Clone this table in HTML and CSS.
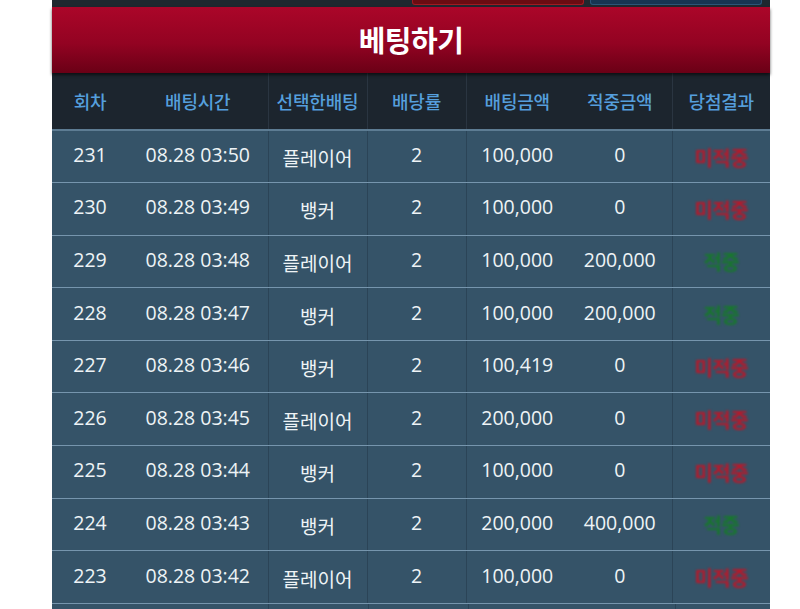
FILE: index.html
```html
<!DOCTYPE html>
<html lang="ko">
<head>
<meta charset="utf-8">
<link rel="stylesheet" href="styles.css">
</head>
<body>
<div class="panel">
  <div class="topbar">
    <div class="tabs">
      <span class="tab tab-red"></span>
      <span class="tab tab-blue"></span>
    </div>
  </div>
  <div class="title">베팅하기</div>
  <table class="bets">
    <colgroup>
      <col class="c1"><col class="c2"><col class="c3"><col class="c4"><col class="c5"><col class="c6"><col class="c7">
    </colgroup>
    <thead>
      <tr>
        <th>회차</th><th>배팅시간</th><th class="bl">선택한배팅</th><th class="bl">배당률</th><th class="bl">배팅금액</th><th>적중금액</th><th class="bl">당첨결과</th>
      </tr>
    </thead>
    <tbody>
      <tr><td>231</td><td>08.28 03:50</td><td class="bl kr">플레이어</td><td class="bl">2</td><td class="bl">100,000</td><td>0</td><td class="bl res"><span class="lose">미적중</span></td></tr>
      <tr><td>230</td><td>08.28 03:49</td><td class="bl kr">뱅커</td><td class="bl">2</td><td class="bl">100,000</td><td>0</td><td class="bl res"><span class="lose">미적중</span></td></tr>
      <tr><td>229</td><td>08.28 03:48</td><td class="bl kr">플레이어</td><td class="bl">2</td><td class="bl">100,000</td><td>200,000</td><td class="bl res"><span class="win">적중</span></td></tr>
      <tr><td>228</td><td>08.28 03:47</td><td class="bl kr">뱅커</td><td class="bl">2</td><td class="bl">100,000</td><td>200,000</td><td class="bl res"><span class="win">적중</span></td></tr>
      <tr><td>227</td><td>08.28 03:46</td><td class="bl kr">뱅커</td><td class="bl">2</td><td class="bl">100,419</td><td>0</td><td class="bl res"><span class="lose">미적중</span></td></tr>
      <tr><td>226</td><td>08.28 03:45</td><td class="bl kr">플레이어</td><td class="bl">2</td><td class="bl">200,000</td><td>0</td><td class="bl res"><span class="lose">미적중</span></td></tr>
      <tr><td>225</td><td>08.28 03:44</td><td class="bl kr">뱅커</td><td class="bl">2</td><td class="bl">100,000</td><td>0</td><td class="bl res"><span class="lose">미적중</span></td></tr>
      <tr><td>224</td><td>08.28 03:43</td><td class="bl kr">뱅커</td><td class="bl">2</td><td class="bl">200,000</td><td>400,000</td><td class="bl res"><span class="win">적중</span></td></tr>
      <tr><td>223</td><td>08.28 03:42</td><td class="bl kr">플레이어</td><td class="bl">2</td><td class="bl">100,000</td><td>0</td><td class="bl res"><span class="lose">미적중</span></td></tr>
    </tbody>
  </table>
  <div class="more">
    <span class="m1"></span><span class="m2"></span><span class="m3"></span><span class="m4"></span><span class="m5"></span>
  </div>
</div>
</body>
</html>
```

FILE: styles.css
```css
html, body {
  margin: 0;
  padding: 0;
  background: #ffffff;
  overflow: hidden;
  height: 609px;
}
body {
  font-family: "Open Sans", "Noto Sans CJK KR", sans-serif;
}
.panel {
  margin-left: 52px;
  width: 718px;
  background: #1c252e;
}
.topbar {
  height: 7px;
  background: #1f282f;
  overflow: hidden;
}
.tabs {
  display: flex;
  gap: 6px;
  margin-left: 360px;
  height: 7px;
}
.tab {
  display: block;
  width: 172px;
  height: 5px;
  box-sizing: border-box;
  border-radius: 0 0 3px 3px;
}
.tab-red {
  background: #6a0c12;
  border: 1px solid #a01a20;
  border-top: none;
}
.tab-blue {
  background: #173552;
  border: 1px solid #2a5578;
  border-top: none;
}
.title {
  height: 66px;
  line-height: 64px;
  text-align: center;
  color: #ffffff;
  font-family: "Noto Sans CJK KR", sans-serif;
  font-weight: 700;
  font-size: 29px;
  letter-spacing: -0.5px;
  background: linear-gradient(#ab0629 0%, #930322 55%, #6a0016 100%);
  box-shadow: 0 2px 3px rgba(0,0,0,0.6);
  position: relative;
}
.bets {
  width: 718px;
  border-collapse: collapse;
  table-layout: fixed;
}
.c1 { width: 76px; }
.c2 { width: 140px; }
.c3 { width: 99px; }
.c4 { width: 99px; }
.c5 { width: 102px; }
.c6 { width: 104px; }
.c7 { width: 98px; }
thead th {
  height: 56px;
  padding: 0;
  background: #1c252e;
  color: #559fdc;
  font-family: "Noto Sans CJK KR", sans-serif;
  font-weight: 500;
  font-size: 18px;
  letter-spacing: -0.2px;
  text-align: center;
  border-bottom: 2px solid #5d7c93;
}
thead th.bl {
  border-left: 1px solid #2a3541;
}
tbody tr {
  height: 52.6px;
}
tbody td {
  box-sizing: border-box;
  height: 52.6px;
  padding: 0 0 3px 0;
  line-height: 24px;
  background: #355368;
  color: #eef3f6;
  font-size: 19.5px;
  text-align: center;
  border-bottom: 1px solid #7695ad;
  white-space: nowrap;
}
tbody td.bl {
  border-left: 1px solid #2b4457;
}
tbody td.kr {
  font-family: "Noto Sans CJK KR", sans-serif;
  font-size: 19px;
  padding: 3px 0 0 0;
}
tbody td.res {
  font-family: "Noto Sans CJK KR", sans-serif;
  font-weight: 700;
  font-size: 20px;
  letter-spacing: -0.6px;
  padding: 2px 0 0 0;
}
.res span {
  display: inline-block;
  filter: blur(0.8px);
}
.lose { color: #b8182a; }
.win { color: #17782c; }
.more {
  display: flex;
  height: 12px;
  background: #355368;
}
.more span {
  display: block;
  height: 100%;
}
.m1 { width: 216px; }
.m2 { width: 99px; border-left: 1px solid #2b4457; }
.m3 { width: 99px; border-left: 1px solid #2b4457; }
.m4 { width: 206px; border-left: 1px solid #2b4457; }
.m5 { flex: 1; border-left: 1px solid #2b4457; }
```
